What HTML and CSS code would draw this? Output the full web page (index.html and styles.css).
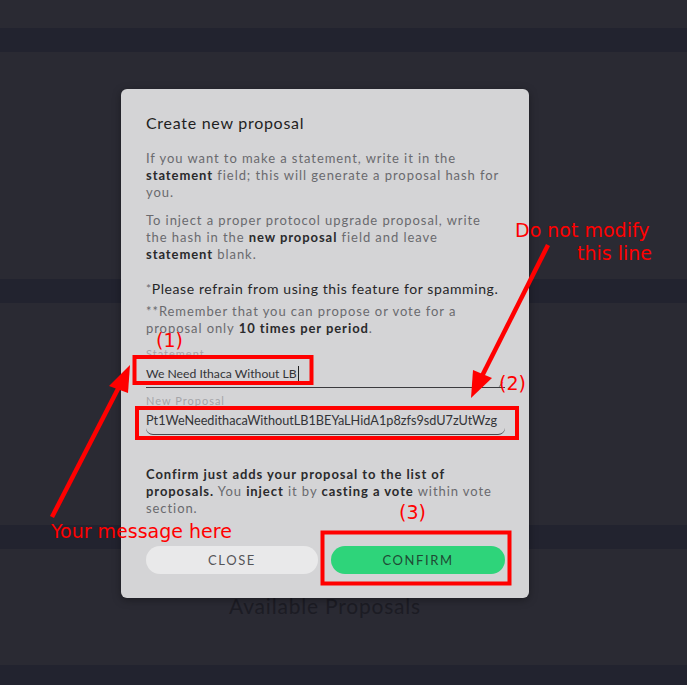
FILE: index.html
```html
<!DOCTYPE html>
<html>
<head>
<meta charset="utf-8">
<link rel="stylesheet" href="styles.css">
</head>
<body>
<div class="page">
  <div class="sec sec-top"></div>
  <div class="band"></div>
  <div class="sec sec-a"></div>
  <div class="band"></div>
  <div class="sec sec-b"></div>
  <div class="band"></div>
  <div class="sec sec-c"><h2 class="bg-title">Available Proposals</h2></div>
  <div class="band band-last"></div>
</div>

<div class="modal">
  <h1 class="title">Create new proposal</h1>
  <p class="txt">If you want to make a statement, write it in the <b>statement</b> field; this will generate a proposal hash for you.</p>
  <p class="txt p2">To inject a proper protocol upgrade proposal, write the hash in the <b>new proposal</b> field and leave <b>statement</b> blank.</p>
  <p class="spam"><span class="star">*</span>Please refrain from using this feature for spamming.</p>
  <p class="txt rem">**Remember that you can propose or vote for a proposal only <b>10 times per period</b>.</p>
  <div class="field">
    <div class="label">Statement</div>
    <div class="input input-plain"><span class="val val-short caret">We Need Ithaca Without LB</span><span class="grip"></span></div>
  </div>
  <div class="field">
    <div class="label">New Proposal</div>
    <div class="input input-round"><span class="val">Pt1WeNeedithacaWithoutLB1BEYaLHidA1p8zfs9sdU7zUtWzg</span></div>
  </div>
  <p class="txt confirm-note"><b>Confirm just adds your proposal to the list of proposals.</b> You <b>inject</b> it by <b>casting a vote</b> within vote section.</p>
  <div class="actions">
    <button class="btn btn-close">CLOSE</button>
    <button class="btn btn-confirm">CONFIRM</button>
  </div>
</div>

<svg class="notes" width="687" height="685" viewBox="0 0 687 685">
  <g fill="none" stroke="#ff0000" stroke-width="4">
    <rect x="134.5" y="357" width="177" height="26"/>
    <rect x="137" y="408" width="380" height="30"/>
    <rect x="322.5" y="532.5" width="187" height="51"/>
  </g>
  <g stroke="#ff0000" stroke-width="4.5" stroke-linecap="butt">
    <line x1="52" y1="517" x2="120" y2="385"/>
    <line x1="548" y1="245" x2="480" y2="380"/>
  </g>
  <g fill="#ff0000">
    <polygon points="130,365 109,386 128,393"/>
    <polygon points="471,398 473,370 492,378"/>
  </g>
  <g class="note-text" fill="#ff0000">
    <text x="156" y="347">(1)</text>
    <text x="499" y="390">(2)</text>
    <text x="399" y="519">(3)</text>
    <text x="515" y="237">Do not modify</text>
    <text x="577" y="260">this line</text>
    <text x="51" y="538">Your message here</text>
  </g>
</svg>
</body>
</html>
```

FILE: styles.css
```css
* { box-sizing: border-box; }
html, body { margin: 0; padding: 0; }
body {
  width: 687px;
  height: 685px;
  overflow: hidden;
  background: #2a2a33;
  font-family: Lato, "Open Sans", sans-serif;
  position: relative;
}
.page { display: flex; flex-direction: column; }
.sec { background: #2a2a33; }
.sec-top { height: 28px; }
.sec-a { height: 227px; }
.sec-b { height: 222px; }
.sec-c {
  height: 116px;
  display: flex;
  justify-content: center;
  padding-right: 37px;
}
.band { height: 24px; background: #22232f; }
.band-last { height: 21px; }
.bg-title {
  margin: 45px 0 0;
  font-weight: 400;
  font-size: 21px;
  letter-spacing: 0.8px;
  line-height: 24px;
  height: 24px;
  color: #1c1c24;
}

.modal {
  position: absolute;
  left: 121px;
  top: 89px;
  width: 408px;
  height: 509px;
  background: #d4d4d6;
  border-radius: 6px;
  box-shadow: 0 2px 8px rgba(0,0,0,0.35);
  padding: 24px 24px 24px 25px;
  display: flex;
  flex-direction: column;
}
.title {
  margin: 0;
  font-size: 16px;
  font-weight: 400;
  line-height: 20px;
  letter-spacing: 0.72px;
  color: #1f1f22;
}
.txt {
  margin: 17px 0 0;
  font-size: 13px;
  line-height: 17px;
  letter-spacing: 0.93px;
  color: #6a6a6e;
}
.txt b { font-weight: 700; color: #2a2a2c; }
.p2 { margin-top: 11px; }
.spam {
  margin: 17px 0 0;
  font-size: 14px;
  line-height: 17px;
  letter-spacing: 0.6px;
  color: #262628;
}
.star { color: #6a6a6e; font-size: 12px; vertical-align: 1px; }
.rem { margin-top: 6px; line-height: 16.5px; }

.field { display: flex; flex-direction: column; }
.field:first-of-type { margin-top: 11px; }
.label {
  font-size: 11px;
  line-height: 13px;
  letter-spacing: 1px;
  color: #a4a4a8;
}
.input {
  height: 28px;
  width: 359px;
  display: flex;
  align-items: center;
  font-size: 12.7px;
  color: #333336;
  position: relative;
}
.input-plain { border-bottom: 1px solid #3a3a3e; padding-bottom: 1px; }
.input-round {
  border-bottom: 1px solid #4a4a4e;
  border-radius: 0 0 7px 7px;
  padding-bottom: 1px;
}
.field + .field .label { margin-top: 6px; }
.val { white-space: nowrap; }
.val-short { font-size: 12.2px; }
.caret { border-right: 1px solid #222; padding-right: 1px; line-height: 15px; }
.grip {
  position: absolute;
  right: 1px;
  bottom: 2px;
  width: 6px;
  height: 1px;
  background: #777;
  transform: rotate(-50deg);
}

.confirm-note { margin-top: 31px; }

.actions {
  margin-top: auto;
  display: flex;
  gap: 13px;
  width: 359px;
}
.btn {
  height: 28px;
  border: none;
  border-radius: 14px;
  font-family: Lato, "Open Sans", sans-serif;
  font-size: 13px;
  letter-spacing: 1.6px;
  padding: 0;
  cursor: pointer;
}
.btn-close { width: 172px; background: #e9e9ea; color: #555558; }
.btn-confirm { width: 174px; background: #2ed47a; color: #1f4a34; }

.notes {
  position: absolute;
  left: 0;
  top: 0;
  pointer-events: none;
}
.note-text {
  font-family: "DejaVu Sans", sans-serif;
  font-size: 19px;
}
```
